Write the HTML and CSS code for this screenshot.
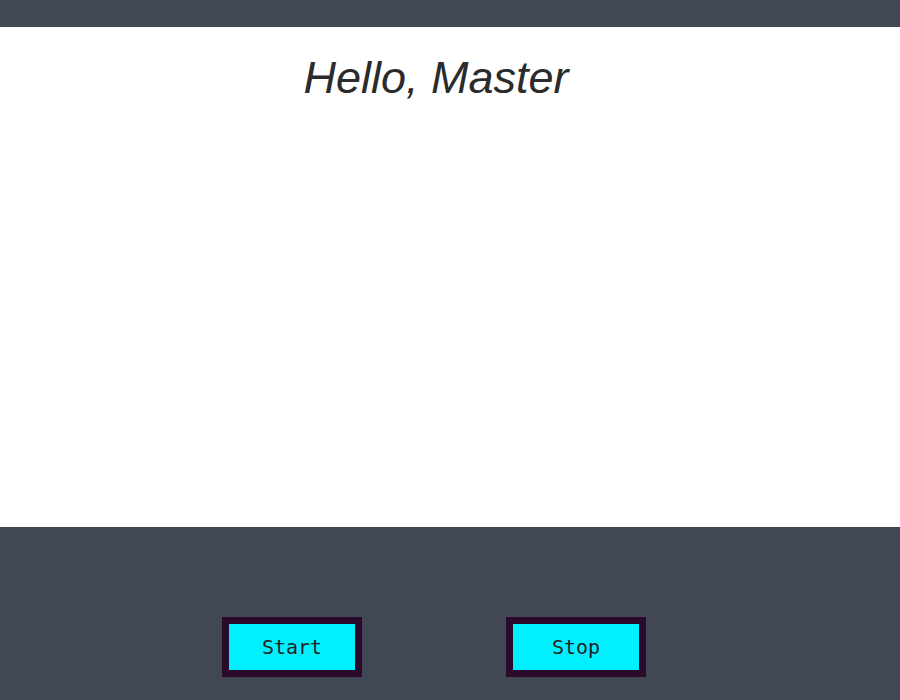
FILE: index.html
```html
<!DOCTYPE html>
<html>
<head>
<meta charset="utf-8">
<link rel="stylesheet" href="styles.css">
</head>
<body>
<header class="topbar"></header>
<main class="stage">
  <h1 class="greeting">Hello, Master</h1>
</main>
<footer class="controls">
  <button class="btn">Start</button>
  <button class="btn">Stop</button>
</footer>
</body>
</html>
```
FILE: styles.css
```css
html, body {
  margin: 0;
  padding: 0;
  background: #414753;
}
body {
  width: 900px;
  height: 700px;
  overflow: hidden;
  font-family: "Liberation Sans", Arial, sans-serif;
}
.topbar {
  height: 27px;
  background: #414753;
}
.stage {
  height: 500px;
  background: #ffffff;
}
.greeting {
  margin: 0;
  padding-top: 28px;
  font-size: 45px;
  font-weight: normal;
  font-style: italic;
  color: #2b2b2b;
  line-height: 1;
  text-align: center;
  padding-right: 28px;
}
.controls {
  display: flex;
  gap: 144px;
  padding: 90px 0 0 222px;
}
.btn {
  width: 140px;
  height: 60px;
  box-sizing: border-box;
  border: 7px solid #2a0a2a;
  background: #00f0ff;
  color: #222;
  font-family: "DejaVu Sans Mono", monospace;
  font-size: 20px;
  padding: 0;
  border-radius: 0;
}
```
